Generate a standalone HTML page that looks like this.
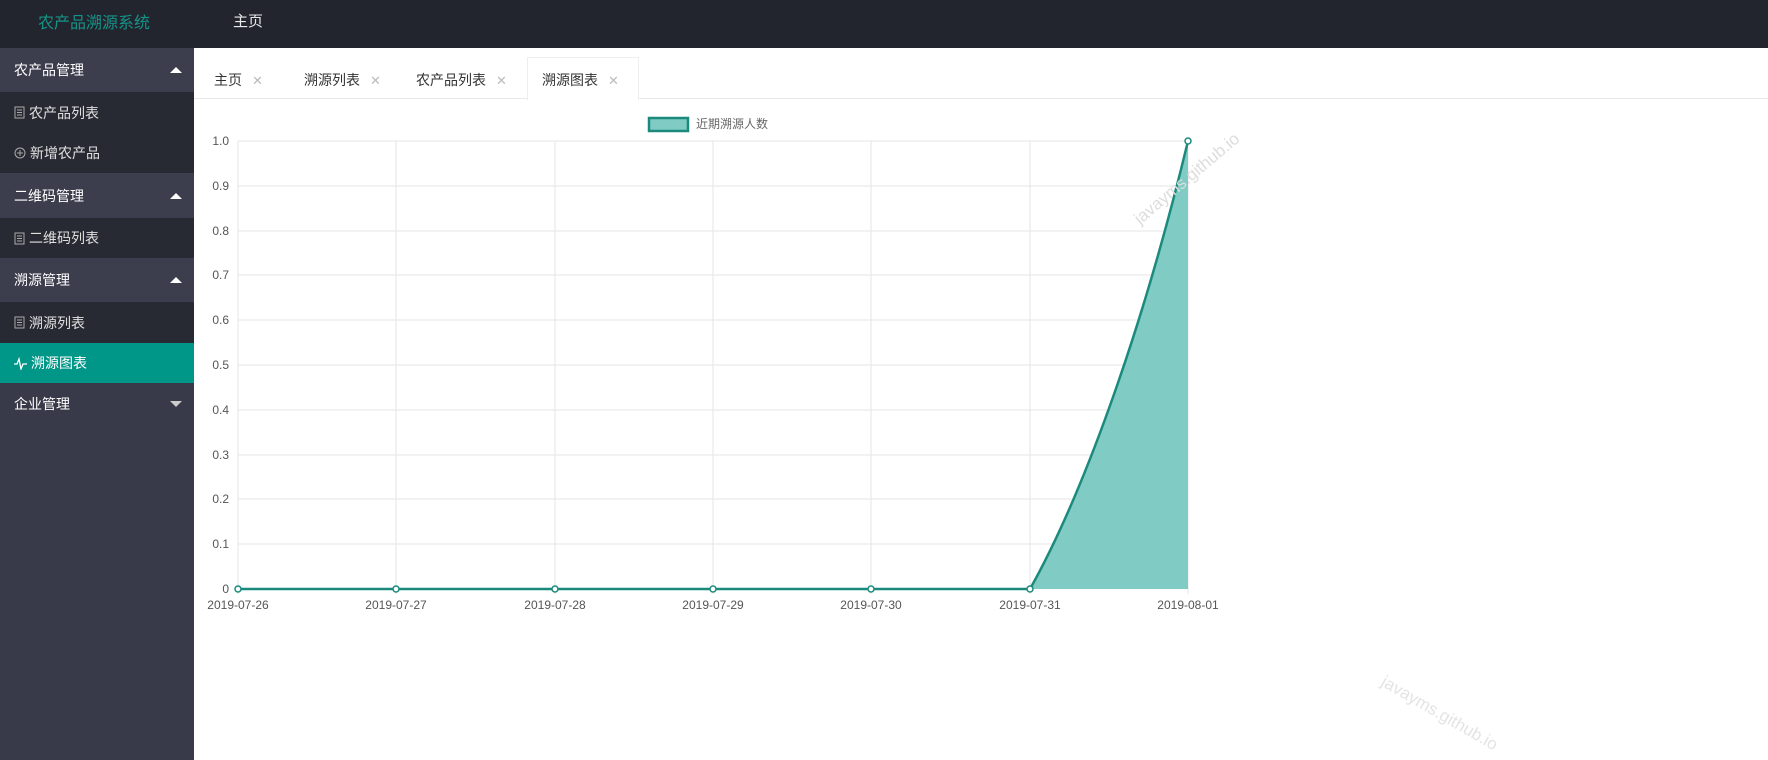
<!DOCTYPE html>
<html><head><meta charset="utf-8"><style>
*{margin:0;padding:0;box-sizing:border-box}
body{width:1768px;height:760px;overflow:hidden;background:#fff;font-family:"Liberation Sans","Noto Sans CJK SC",sans-serif;position:relative}
.hdr{position:absolute;left:0;top:0;width:1768px;height:48px;background:#23252e}
.logo{position:absolute;left:38px;top:9px;color:#149488;font-size:16px}
.home{position:absolute;left:233px;top:10px;color:#e8e8e8;font-size:15px}
.side{position:absolute;left:0;top:48px;width:194px;height:712px;background:#393a49}
.row{position:absolute;left:0;width:194px;color:#fff;font-size:14px;padding-left:14px;display:flex;align-items:center}
.g{background:#3c3d4d}
.i{background:#272a33;color:#e0e0e0}
.a{background:#009688;color:#fff}
.tri{position:absolute;right:12px;width:0;height:0;border-left:6px solid transparent;border-right:6px solid transparent}
.up{border-bottom:6px solid #fff}
.dn{border-top:6px solid #ccc}
.row svg{margin-right:4px}
.tabs{position:absolute;left:194px;top:48px;right:0;height:51px;border-bottom:1px solid #e8e8e8}
.tab{position:absolute;top:22px;font-size:14px;color:#333}
.tab span{color:#bbb;margin-left:10px;font-size:13px}
.act{position:absolute;left:527px;top:57px;width:112px;height:43px;background:#fff;border:1px solid #eee;border-bottom:none}
</style></head><body>
<div class="hdr"><div class="logo">农产品溯源系统</div><div class="home">主页</div></div>
<div class="side">
<div class="row g" style="top:0;height:44px">农产品管理<i class="tri up"></i></div>
<div class="row i" style="top:44px;height:41px"><svg width="11" height="13" viewBox="0 0 11 13"><rect x="1" y="1" width="9" height="11" fill="none" stroke="#aaa"/><path d="M3 4h5M3 6.5h5M3 9h5" stroke="#aaa"/></svg>农产品列表</div>
<div class="row i" style="top:85px;height:40px"><svg width="12" height="12" viewBox="0 0 12 12"><circle cx="6" cy="6" r="5" fill="none" stroke="#aaa"/><path d="M6 3v6M3 6h6" stroke="#aaa"/></svg>新增农产品</div>
<div class="row g" style="top:125px;height:45px">二维码管理<i class="tri up"></i></div>
<div class="row i" style="top:170px;height:40px"><svg width="11" height="13" viewBox="0 0 11 13"><rect x="1" y="1" width="9" height="11" fill="none" stroke="#aaa"/><path d="M3 4h5M3 6.5h5M3 9h5" stroke="#aaa"/></svg>二维码列表</div>
<div class="row g" style="top:210px;height:44px">溯源管理<i class="tri up"></i></div>
<div class="row i" style="top:254px;height:41px"><svg width="11" height="13" viewBox="0 0 11 13"><rect x="1" y="1" width="9" height="11" fill="none" stroke="#aaa"/><path d="M3 4h5M3 6.5h5M3 9h5" stroke="#aaa"/></svg>溯源列表</div>
<div class="row a" style="top:295px;height:40px"><svg width="13" height="13" viewBox="0 0 13 13"><path d="M0 7h3l2-5 2 10 2-5h4" fill="none" stroke="#fff" stroke-width="1.3"/></svg>溯源图表</div>
<div class="row" style="top:335px;height:41px">企业管理<i class="tri dn"></i></div>
</div>
<div class="tabs"></div>
<div class="act"></div>
<div class="tab" style="left:214px;top:70px">主页<span>✕</span></div>
<div class="tab" style="left:304px;top:70px">溯源列表<span>✕</span></div>
<div class="tab" style="left:416px;top:70px">农产品列表<span>✕</span></div>
<div class="tab" style="left:542px;top:70px">溯源图表<span>✕</span></div>
<svg style="position:absolute;left:0;top:0" width="1768" height="760" font-family="Liberation Sans,sans-serif">
<g stroke="#e6e6e6" stroke-width="1">
<line x1="238" y1="141" x2="1188" y2="141"/><line x1="238" y1="186" x2="1188" y2="186"/><line x1="238" y1="231" x2="1188" y2="231"/><line x1="238" y1="275" x2="1188" y2="275"/><line x1="238" y1="320" x2="1188" y2="320"/><line x1="238" y1="365" x2="1188" y2="365"/><line x1="238" y1="410" x2="1188" y2="410"/><line x1="238" y1="455" x2="1188" y2="455"/><line x1="238" y1="499" x2="1188" y2="499"/><line x1="238" y1="544" x2="1188" y2="544"/>
<line x1="238" y1="141" x2="238" y2="594"/><line x1="396" y1="141" x2="396" y2="594"/><line x1="555" y1="141" x2="555" y2="594"/><line x1="713" y1="141" x2="713" y2="594"/><line x1="871" y1="141" x2="871" y2="594"/><line x1="1030" y1="141" x2="1030" y2="594"/><line x1="1188" y1="141" x2="1188" y2="594"/>
</g>
<path d="M1030,589 C1080,500 1140,340 1188,141 L1188,589 Z" fill="#80cbc3"/>
<path d="M238,589 L1030,589 C1080,500 1140,340 1188,141" fill="none" stroke="#1b8a7d" stroke-width="2.5"/>
<g fill="#fff" stroke="#1b8a7d" stroke-width="1.5">
<circle cx="238" cy="589" r="3"/><circle cx="396" cy="589" r="3"/><circle cx="555" cy="589" r="3"/><circle cx="713" cy="589" r="3"/><circle cx="871" cy="589" r="3"/><circle cx="1030" cy="589" r="3"/><circle cx="1188" cy="141" r="3"/>
</g>
<rect x="649" y="118" width="39" height="13" fill="#80cbc3" stroke="#1b8a7d" stroke-width="2.5"/>
<text x="696" y="128" font-size="12" fill="#666" font-family="Liberation Sans,Noto Sans CJK SC,sans-serif">近期溯源人数</text>
<g font-size="12" fill="#555" text-anchor="end">
<text x="229" y="145">1.0</text><text x="229" y="190">0.9</text><text x="229" y="235">0.8</text><text x="229" y="279">0.7</text><text x="229" y="324">0.6</text><text x="229" y="369">0.5</text><text x="229" y="414">0.4</text><text x="229" y="459">0.3</text><text x="229" y="503">0.2</text><text x="229" y="548">0.1</text><text x="229" y="593">0</text>
</g>
<g font-size="12" fill="#555" text-anchor="middle">
<text x="238" y="609">2019-07-26</text><text x="396" y="609">2019-07-27</text><text x="555" y="609">2019-07-28</text><text x="713" y="609">2019-07-29</text><text x="871" y="609">2019-07-30</text><text x="1030" y="609">2019-07-31</text><text x="1188" y="609">2019-08-01</text>
</g>
<text x="1140" y="225" font-size="17" fill="#ddd" transform="rotate(-40 1140 225)">javayms.github.io</text>
<text x="1380" y="685" font-size="17" fill="#e4e4e4" transform="rotate(30 1380 685)">javayms.github.io</text>
</svg>
</body></html>
